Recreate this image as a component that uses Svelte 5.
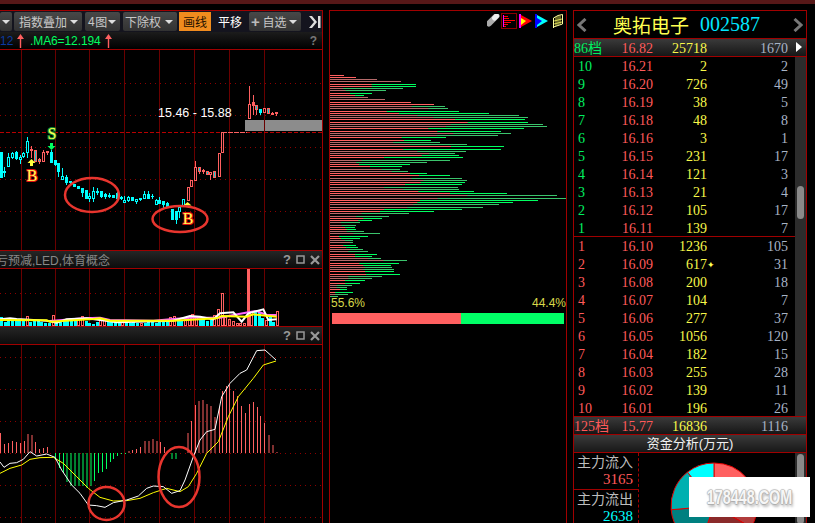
<script>
  const gridX = [21, 55, 89, 124, 159, 194, 229, 264];

  // x, body top, body bottom, wick top, wick bottom, kind (c solid cyan, h hollow cyan, r hollow red, s solid red, m red with cyan body)
  const candles = [
    [1, 152, 178, 152, 178, 'c'], [4, 171, 173, 167, 177, 'c'], [8, 157, 167, 153, 167, 'h'], [12, 153, 158, 152, 159, 'h'],
    [16, 152, 159, 151, 160, 'c'], [20, 157, 160, 155, 164, 'h'], [23, 153, 157, 152, 158, 'h'], [27, 141, 153, 137, 158, 'h'],
    [31, 149, 151, 146, 158, 's'], [35, 150, 162, 150, 162, 'm'], [39, 159, 162, 158, 164, 'm'], [43, 152, 162, 150, 162, 'r'],
    [47, 151, 153, 151, 155, 's'], [51, 152, 163, 150, 163, 'c'], [55, 160, 165, 160, 166, 'c'], [58, 163, 172, 163, 177, 'c'],
    [62, 176, 180, 168, 180, 'h'], [66, 177, 183, 175, 185, 'c'], [70, 181, 183, 181, 184, 'c'], [74, 184, 187, 184, 187, 'c'],
    [78, 186, 189, 186, 189, 'c'], [82, 188, 193, 188, 197, 'c'], [86, 190, 199, 190, 199, 'c'], [89, 196, 199, 193, 202, 'h'],
    [93, 191, 199, 187, 202, 'h'], [97, 191, 193, 188, 195, 'c'], [101, 191, 197, 191, 198, 'c'], [105, 194, 197, 193, 199, 'c'],
    [109, 195, 197, 193, 198, 'c'], [113, 195, 198, 195, 198, 'c'], [117, 193, 199, 192, 199, 'c'], [121, 197, 199, 196, 200, 'c'],
    [124, 200, 203, 196, 203, 'h'], [128, 197, 201, 196, 202, 'h'], [132, 197, 201, 197, 201, 'c'], [136, 199, 202, 199, 204, 'h'],
    [140, 198, 200, 198, 201, 'c'], [144, 194, 199, 191, 199, 'h'], [148, 194, 199, 191, 199, 'c'], [152, 196, 197, 194, 199, 'c'],
    [156, 200, 205, 199, 205, 'h'], [159, 200, 204, 197, 204, 'c'], [163, 201, 205, 201, 208, 'c'], [167, 203, 207, 202, 207, 'c'],
    [172, 209, 220, 209, 220, 'c'], [176, 211, 220, 211, 224, 'c'], [179, 207, 212, 207, 218, 'h'], [183, 199, 206, 199, 206, 'h'],
    [188, 187, 201, 187, 201, 'r'], [191, 180, 187, 180, 187, 'r'], [195, 167, 181, 161, 181, 'r'], [199, 167, 172, 167, 174, 'm'],
    [203, 170, 172, 169, 174, 's'], [207, 171, 175, 171, 175, 'm'], [210, 172, 175, 172, 180, 'r'], [214, 171, 178, 171, 178, 'm'],
    [219, 153, 177, 153, 177, 'r'], [222, 132, 153, 132, 153, 'r'], [249, 104, 119, 86, 119, 'r'], [253, 102, 106, 95, 115, 's'],
    [256, 105, 110, 105, 115, 'm'], [260, 109, 113, 109, 115, 'c'], [264, 108, 113, 108, 113, 'r'], [268, 108, 114, 108, 114, 'm'],
    [272, 113, 115, 112, 115, 's'], [276, 112, 114, 112, 116, 's']
  ];

  const volHeights = [9, 4, 6, 6, 5, 5, 6, 9, 4, 5, 5, 4, 3, 3, 10, 5, 6, 6, 5, 5, 5, 7, 9, 5, 3, 2, 4, 5, 5, 4, 5, 3, 5, 4, 5, 3, 4, 3, 2, 3, 4, 4, 3, 5, 4, 6, 8, 9, 5, 5, 6, 9, 11, 8, 6, 7, 5, 6, 10, 16, 32, 8, 6, 4, 2, 2, 2, 56, 13, 14, 14, 8, 5, 10, 4, 14];
  const volRed = new Set([7, 14, 21, 22, 27, 28, 33, 38, 46, 47, 50, 51, 52, 53, 58, 59, 60, 61, 62, 63, 64, 65, 66, 67, 68, 72, 75]);
  const volBars = volHeights.map((h, i) => ({ x: i * 3.68, h, red: volRed.has(i) }));

  // pairs read off the zoom: x, y in 3x pixels
  const toPts = (list, top) => list.map(([x, y]) => `${x / 3},${top + y / 3}`).join(' ');

  const volWhite = [[0, 208], [30, 205], [50, 207], [100, 210], [140, 212], [170, 218], [200, 208], [260, 205], [300, 210], [350, 217], [470, 214], [520, 212], [570, 198], [600, 200], [640, 208], [660, 190], [700, 187], [725, 215], [745, 190], [790, 178], [805, 210], [830, 208]];
  const volPink = [[150, 213], [250, 205], [300, 203], [330, 210], [460, 212], [520, 207], [570, 203], [660, 203], [700, 195], [745, 187], [770, 183], [800, 195], [830, 195]];
  const volYellow = [[0, 210], [140, 211], [150, 215], [280, 207], [300, 205], [330, 212], [520, 212], [600, 208], [650, 205], [665, 198], [740, 200], [760, 193], [830, 200]];

  const dif = [[0, 636], [12, 652], [30, 640], [50, 638], [70, 628], [90, 605], [110, 618], [140, 612], [165, 622], [185, 660], [215, 705], [240, 730], [265, 765], [290, 767], [315, 772], [340, 758], [380, 750], [415, 738], [440, 715], [460, 708], [490, 710], [515, 730], [540, 722], [555, 690], [580, 620], [600, 570], [620, 545], [645, 538], [665, 440], [690, 400], [720, 370], [740, 360], [770, 302], [795, 300], [828, 330]];
  const dea = [[0, 670], [30, 655], [65, 645], [90, 628], [120, 623], [160, 622], [190, 640], [230, 680], [265, 715], [300, 742], [340, 753], [380, 752], [420, 745], [460, 728], [500, 715], [540, 725], [565, 710], [590, 670], [620, 610], [655, 575], [685, 500], [715, 440], [760, 385], [790, 345], [828, 333]];

  // x, height: positive goes up in red, negative goes down in green
  const macd = [[0, 20], [4, 9], [8, 10], [12, 12], [16, 11], [20, 10], [24, 12], [27.5, 19], [31.5, 18], [35, 11], [39, 4], [43, 5], [47, 6], [55, -7], [59, -15], [63, -20], [66.5, -29], [70.5, -33], [74.5, -33], [78.5, -33], [82.5, -33], [86.5, -35], [90.5, -33], [94, -28], [98, -20], [102, -19], [106, -16], [110, -9], [113, -6], [117, -3], [121, -1], [125, -1], [128.5, 2], [132, 3], [136, 4], [140, 6], [144.5, 12], [148.5, 12], [152.5, 14], [156.5, 12], [160, 11], [164, 6], [171.5, -6], [175.5, -6], [187.5, 20], [191, 32], [195, 48], [198.5, 52], [202.5, 53], [206.5, 49], [210.5, 47], [214.5, 36], [219, 46], [222, 62], [226, 67], [229, 68], [233, 62], [237, 57], [241, 47], [245, 40], [249, 49], [253, 51], [257, 46], [260, 37], [264, 30], [268.5, 18], [272.5, 8], [276.5, 1]];

  // y in 3x pixels, end of red, end of green
  const profile = [[226, 42, 0], [232, 78, 0], [238, 141, 0], [244, 213, 0], [253, 125, 258], [259, 125, 258], [265, 40, 219], [271, 47, 168], [280, 60, 126], [286, 75, 102], [292, 114, 0], [298, 165, 0], [307, 243, 0], [313, 312, 0], [319, 245, 345], [325, 295, 354], [334, 170, 387], [340, 207, 477], [346, 262, 567], [352, 310, 594], [358, 375, 585], [367, 413, 594], [373, 362, 639], [379, 348, 651], [385, 295, 582], [394, 322, 513], [400, 370, 543], [406, 320, 504], [412, 215, 348], [421, 222, 303], [427, 190, 330], [433, 240, 411], [439, 363, 522], [448, 220, 513], [454, 262, 408], [460, 297, 375], [466, 275, 387], [472, 162, 399], [481, 95, 360], [487, 78, 291], [493, 87, 240], [499, 120, 216], [508, 155, 210], [514, 185, 234], [520, 240, 291], [526, 267, 360], [535, 245, 396], [541, 280, 411], [547, 272, 405], [553, 225, 396], [562, 162, 384], [568, 220, 387], [574, 265, 432], [580, 360, 531], [586, 412, 681], [595, 323, 720], [601, 270, 624], [607, 262, 549], [613, 250, 507], [622, 232, 459], [628, 162, 396], [634, 150, 312], [640, 95, 237], [649, 78, 177], [655, 100, 156], [661, 85, 126], [667, 33, 90], [676, 35, 78], [682, 45, 75], [688, 50, 78], [694, 50, 102], [700, 70, 150], [709, 27, 114], [715, 33, 90], [721, 45, 69], [727, 60, 69], [736, 40, 78], [742, 48, 84], [748, 60, 99], [754, 55, 114], [763, 75, 141], [769, 75, 126], [775, 115, 153], [781, 160, 231], [790, 88, 207], [796, 100, 183], [802, 105, 186], [808, 100, 192], [814, 105, 192], [823, 108, 210], [829, 55, 156], [835, 55, 126], [841, 45, 105], [850, 45, 90], [856, 20, 66], [862, 20, 51], [868, 30, 51], [877, 15, 69], [883, 15, 54], [889, 0, 24]];

  const sells = [
    ['10', '16.21', '2', '2'], ['9', '16.20', '726', '49'], ['8', '16.19', '38', '5'], ['7', '16.18', '48', '8'], ['6', '16.16', '3', '1'],
    ['5', '16.15', '231', '17'], ['4', '16.14', '121', '3'], ['3', '16.13', '21', '4'], ['2', '16.12', '105', '17'], ['1', '16.11', '139', '7']
  ];
  const buys = [
    ['1', '16.10', '1236', '105'], ['2', '16.09', '617', '31'], ['3', '16.08', '200', '18'], ['4', '16.07', '104', '7'], ['5', '16.06', '277', '37'],
    ['6', '16.05', '1056', '120'], ['7', '16.04', '182', '15'], ['8', '16.03', '255', '28'], ['9', '16.02', '139', '11'], ['10', '16.01', '196', '26']
  ];

  function wedge(cx, cy, r, a0, a1) {
    const p = (a) => `${cx + r * Math.sin(a * Math.PI / 180)} ${cy - r * Math.cos(a * Math.PI / 180)}`;
    return `M${cx} ${cy}L${p(a0)}A${r} ${r} 0 ${a1 - a0 > 180 ? 1 : 0} 1 ${p(a1)}Z`;
  }
</script>

<div class="app">
  <div class="topbar"></div>
  <div class="main">
    <section class="left">
      <div class="toolbar">
        <div class="btn cut"><i class="caret"></i></div>
        <div class="btn w68">指数叠加<i class="caret"></i></div>
        <div class="btn w35"><span class="arial">4</span>图<i class="caret"></i></div>
        <div class="btn w54">下除权<i class="caret"></i></div>
        <div class="btn orange">画线</div>
        <div class="plain">平移</div>
        <div class="btn w52"><b class="plus">+</b>自选<i class="caret"></i></div>
        <svg class="endicon" width="13" height="14" viewBox="0 0 13 14">
          <path d="M1 1h3l5 6-5 6H1l5-6z" fill="#ddd" />
          <rect x="10" y="1" width="2.5" height="12" fill="#ddd" />
        </svg>
      </div>
      <div class="ma-row">
        <span class="ma-blue">12</span>
        <svg class="up" width="7" height="14" viewBox="0 0 7 14"><path d="M3.5 0L7 5H4.2V14H2.8V5H0z" fill="#ff6060" /></svg>
        <span class="ma-green">.MA6=12.194</span>
        <svg class="up" width="7" height="14" viewBox="0 0 7 14"><path d="M3.5 0L7 5H4.2V14H2.8V5H0z" fill="#ff6060" /></svg>
        <span class="help">?</span>
      </div>

      <svg class="chart" width="322" height="200" viewBox="0 50 322 200">
        {#each [83, 115, 147, 179, 211] as y}
          <line x1="0" x2="322" y1={y + 0.5} y2={y + 0.5} class="dots" />
        {/each}
        {#each gridX as x}
          <line x1={x + 0.5} x2={x + 0.5} y1="50" y2="250" class="grid" />
        {/each}
        <rect x="245" y="120" width="77" height="11" fill="#8c8c8c" />
        <line x1={264.5} x2={264.5} y1="120" y2="131" class="grid" />
        <line x1="0" x2="322" y1="132.5" y2="132.5" class="dash" />
        <line x1="222" x2="247" y1="132.5" y2="132.5" stroke="#ff6060" stroke-dasharray="5 1" />
        {#each candles as [x, top, bottom, wickTop, wickBottom, kind]}
          <line x1={x + 0.5} x2={x + 0.5} y1={wickTop} y2={wickBottom} stroke={'rsm'.includes(kind) ? '#ff6060' : '#00ffff'} />
          {#if kind === 'c'}
            <rect x={x - 1} y={top} width="3" height={bottom - top} fill="#00ffff" />
          {:else if kind === 'h'}
            <rect x={x - 0.5} y={top + 0.5} width="2" height={bottom - top - 1} fill="#000" stroke="#00ffff" />
          {:else if kind === 's'}
            <rect x={x - 1} y={top} width="3" height={bottom - top} fill="#ff6060" />
          {:else if kind === 'm'}
            <rect x={x - 0.5} y={top + 0.5} width="2" height={bottom - top - 1} fill="#00cccc" stroke="#ff6060" />
          {:else}
            <rect x={x - 0.5} y={top + 0.5} width="2" height={bottom - top - 1} fill="#000" stroke="#ff6060" />
          {/if}
        {/each}
        <path d="M31.5 159l4 4h-2.5v3h-3v-3h-2.5z" fill="#ffff40" />
        <path d="M51.5 150l-4-4h2.500v-3h3v3h2.500z" fill="#00ff60" />
        <path d="M187.500 202l4 3.500h-8z" fill="#ffff40" />
        <text x="32" y="181" class="mark b">B</text>
        <text x="52" y="139" class="mark s">S</text>
        <text x="188" y="223.500" class="mark b">B</text>
        <text x="158" y="117" class="range">15.46 - 15.88</text>
        <ellipse cx="92" cy="195" rx="27" ry="17" class="ring" />
        <ellipse cx="180" cy="219" rx="27.500" ry="13" class="ring" />
      </svg>

      <div class="subtitle">
        <span class="subtext">亏预减,LED,体育概念</span>
        <span class="subicons">
          <span>?</span>
          <svg width="9" height="9" viewBox="0 0 9 9"><rect x="1" y="1" width="7" height="7" fill="none" stroke="#999" stroke-width="1.500" /></svg>
          <svg width="10" height="10" viewBox="0 0 10 10"><path d="M1 1l8 8M9 1L1 9" stroke="#999" stroke-width="2.200" /></svg>
        </span>
      </div>

      <svg class="chart" width="322" height="57" viewBox="0 269 322 57">
        <line x1="0" x2="322" y1="293.500" y2="293.500" class="dots" />
        {#each gridX as x}
          <line x1={x + 0.5} x2={x + 0.5} y1="269" y2="326" class="grid" />
        {/each}
        {#each volBars as bar}
          {#if bar.red}
            <rect x={Math.round(bar.x) + 0.5} y={325.5 - bar.h} width="2" height={bar.h} fill={bar.h > 40 ? '#ff6060' : 'none'} stroke="#ff6060" />
          {:else}
            <rect x={Math.round(bar.x)} y={326 - bar.h} width="3" height={bar.h} fill="#00ffff" />
          {/if}
        {/each}
        <polyline points={toPts(volPink, 250)} class="vline" stroke="#ff66ff" stroke-width="2" />
        <polyline points={toPts(volWhite, 250)} class="vline" stroke="#fff" stroke-width="2" />
        <polyline points={toPts(volYellow, 250)} class="vline" stroke="#ffff00" stroke-width="2" />
      </svg>

      <div class="subtitle">
        <span></span>
        <span class="subicons">
          <span>?</span>
          <svg width="9" height="9" viewBox="0 0 9 9"><rect x="1" y="1" width="7" height="7" fill="none" stroke="#999" stroke-width="1.500" /></svg>
          <svg width="10" height="10" viewBox="0 0 10 10"><path d="M1 1l8 8M9 1L1 9" stroke="#999" stroke-width="2.200" /></svg>
        </span>
      </div>

      <svg class="chart last" width="322" height="178" viewBox="0 345 322 178">
        {#each [357, 389, 421, 453, 485, 517] as y}
          <line x1="0" x2="322" y1={y + 0.5} y2={y + 0.5} class="dots" />
        {/each}
        {#each gridX as x}
          <line x1={x + 0.5} x2={x + 0.5} y1="345" y2="523" class="grid" />
        {/each}
        {#each macd as [x, h]}
          <line x1={x + 0.5} x2={x + 0.5} y1={453} y2={453 - h} stroke={h > 0 ? '#ff6060' : '#00ff60'} />
        {/each}
        <polyline points={toPts(dea, 250)} class="mline" stroke="#ffff00" />
        <polyline points={toPts(dif, 250)} class="mline" stroke="#fff" />
        <ellipse cx="106.500" cy="503.500" rx="18" ry="16.500" class="ring" />
        <ellipse cx="179" cy="477" rx="20.500" ry="30" class="ring" />
      </svg>
    </section>

    <section class="middle">
      <div class="tools">
        <svg width="13" height="14" viewBox="0 0 13 14">
          <path d="M2 9.500L9.500 2" stroke="#aaa" stroke-width="6" stroke-linecap="round" />
          <path d="M7.500 4L9.500 2" stroke="#eee" stroke-width="5" stroke-linecap="round" />
        </svg>
        <svg class="tool-box" width="16" height="16" viewBox="0 0 16 16">
          <rect x="0.500" y="0.500" width="15" height="15" fill="#000" stroke="#8b0000" />
          <rect x="2" y="2" width="1" height="12" fill="#ff00ff" />
          <path d="M3 3h4v1H3zM3 5h5v1H3zM3 7h11v1H3zM3 9h7v1H3zM3 11h4v1H3zM3 13h2v1H3z" fill="#ff0000" />
        </svg>
        <svg class="tool-flag" width="13" height="14" viewBox="0 0 13 14">
          <path d="M0 0h2v14H0z" fill="#ff00ff" />
          <path d="M2 1l11 6-11 6z" fill="#ff0000" />
          <path d="M2 4l5 3-5 4z" fill="#ffff00" />
        </svg>
        <svg class="tool-flag2" width="13" height="14" viewBox="0 0 13 14">
          <path d="M0 0h2v14H0z" fill="#0000ff" />
          <path d="M2 1l11 6-11 6z" fill="#00ffff" />
          <path d="M2 4l5 3-5 4z" fill="#0000ff" />
        </svg>
        <svg class="tool-book" width="10" height="14" viewBox="0 0 10 14">
          <path d="M0.500 14V4L5 1.500 9.500 0.500V10L0.500 13" fill="#000" stroke="#ffffa0" />
          <path d="M3 3v9M5 2v9M7 1.500v9M1 7l8-2M1 10l8-2" stroke="#ffff60" stroke-width="0.800" />
        </svg>
      </div>
      <svg class="profile" width="236" height="223" viewBox="0 74 236 223">
        {#each profile as [y, red, green], i}
          {#if green}
            <rect x="0" y={Math.round(y / 3)} width={green / 3} height="1" fill={i % 4 < 2 ? '#00ff60' : '#3bc46c'} />
          {/if}
          <rect x="0" y={Math.round(y / 3)} width={red / 3} height="1" fill={i % 4 < 2 ? '#ff6060' : '#b56a6a'} />
        {/each}
      </svg>
      <div class="pct">
        <span>55.6%</span>
        <span>44.4%</span>
      </div>
      <div class="ratio">
        <div class="ratio-red"></div>
        <div class="ratio-green"></div>
      </div>
    </section>

    <section class="right">
      <div class="head">
        <svg width="10" height="14" viewBox="0 0 10 14"><path d="M8.500 1L2 7l6.500 6" fill="none" stroke="#777" stroke-width="3" /></svg>
        <span class="name">奥拓电子</span>
        <span class="code">002587</span>
        <svg class="next" width="10" height="14" viewBox="0 0 10 14"><path d="M1.500 1L8 7l-6.500 6" fill="none" stroke="#777" stroke-width="3" /></svg>
      </div>

      <div class="row sum">
        <span class="green">86档</span><span class="red">16.82</span><span class="yellow">25718</span><span class="blue">1670</span>
        <i class="play"></i>
      </div>

      <div class="book">
        <div class="levels">
          <div class="block">
            {#each sells as [n, price, vol, count]}
              <div class="row">
                <span class="green idx">{n}</span><span class="red">{price}</span><span class="yellow">{vol}</span><span class="blue">{count}</span>
              </div>
            {/each}
          </div>
          <div class="block nb">
            {#each buys as [n, price, vol, count]}
              <div class="row">
                <span class="red idx">{n}</span><span class="red">{price}</span>
                <span class="yellow">{vol}{#if price === '16.09'}<i class="star">✦</i>{/if}</span>
                <span class="blue">{count}</span>
              </div>
            {/each}
          </div>
        </div>
        <div class="scroll"><div class="thumb"></div></div>
      </div>

      <div class="row sum two">
        <span class="red">125档</span><span class="red">15.77</span><span class="yellow">16836</span><span class="blue">1116</span>
      </div>

      <div class="fund-title">资金分析(万元)</div>

      <div class="fund">
        <div class="flows">
          <div class="flow">
            <div>主力流入</div>
            <div class="num red">3165</div>
          </div>
          <div class="flow">
            <div>主力流出</div>
            <div class="num cyan">2638</div>
          </div>
        </div>
        <svg class="pie" width="156" height="70" viewBox="639 453 156 70">
          <path d={wedge(714, 506, 43, 0, 50)} fill="#ff6060" stroke="#e00000" />
          <path d={wedge(714, 506, 43, 50, 120)} fill="#b03c3c" stroke="#e00000" />
          <path d={wedge(714, 506, 43, 120, 200)} fill="#8a2a2a" stroke="#e00000" />
          <path d={wedge(714, 506, 43, 200, 265)} fill="#008080" stroke="#e00000" />
          <path d={wedge(714, 506, 43, 265, 322)} fill="#00b0b0" stroke="#e00000" />
          <path d={wedge(714, 506, 43, 322, 360)} fill="#00ffff" stroke="#e00000" />
        </svg>
        <div class="scroll short"><div class="thumb long"></div></div>
      </div>
    </section>
  </div>

  <div class="watermark"><span>178448.COM</span></div>
</div>

<style>
  :global(body) {
    margin: 0;
    background: #000;
  }
  .app {
    position: relative;
    width: 815px;
    height: 523px;
    overflow: hidden;
    background: #000;
    font-family: "Liberation Sans", "Noto Sans CJK SC", sans-serif;
  }
  .topbar {
    height: 4px;
    background: #561818;
  }
  .main {
    display: flex;
    margin-top: 6px;
    height: 513px;
  }

  .left {
    width: 322px;
    flex: none;
    border-top: 1px solid #a00000;
    border-right: 1px solid #a00000;
    display: flex;
    flex-direction: column;
  }
  .toolbar {
    height: 21px;
    display: flex;
    align-items: center;
    background: #14141e;
    color: #c8c8c8;
    font-size: 12px;
    flex: none;
  }
  .btn {
    height: 19px;
    display: flex;
    align-items: center;
    justify-content: space-between;
    box-sizing: border-box;
    padding: 0 4px 0 5px;
    margin-right: 3px;
    background: linear-gradient(#484848, #323232);
    border-radius: 2px;
  }
  .cut {
    width: 12px;
    margin-right: 2px;
    padding: 0 2px 0 0;
    justify-content: flex-end;
  }
  .w68 { width: 68px; }
  .w35 { width: 35px; padding-left: 3px; }
  .w54 { width: 54px; padding-left: 2px; }
  .w52 { width: 52px; padding-left: 2px; }
  .arial { font-size: 12px; }
  .plus { font-size: 15px; color: #bbb; line-height: 1; }
  .orange {
    width: 32px;
    background: #f08c1e;
    color: #1c1000;
    margin-left: -1px;
    margin-right: 7px;
    padding: 0 4px;
    justify-content: center;
    border-radius: 0;
  }
  .plain {
    width: 31px;
    color: #fff;
  }
  .caret {
    display: block;
    width: 0;
    height: 0;
    border-left: 4px solid transparent;
    border-right: 4px solid transparent;
    border-top: 4px solid #ddd;
  }
  .endicon {
    margin-left: 4px;
  }
  .ma-row {
    height: 17px;
    display: flex;
    align-items: center;
    flex: none;
    font-size: 12px;
    background: linear-gradient(#1c1c1c, #000);
    border-bottom: 1px solid #a00000;
  }
  .ma-blue {
    color: #0b3aa0;
    width: 17px;
  }
  .ma-green {
    color: #00ff60;
    margin: 0 4px 0 6px;
    letter-spacing: -0.1px;
  }
  .up {
    flex: none;
  }
  .help {
    margin-left: auto;
    margin-right: 5px;
    color: #777;
    font-weight: bold;
  }
  .chart {
    display: block;
    flex: none;
  }
  .chart.last {
    flex: 1;
  }
  .grid {
    stroke: #6a0000;
  }
  .dots {
    stroke: #8b0000;
    stroke-dasharray: 1 4;
  }
  .dash {
    stroke: #b80000;
    stroke-dasharray: 4 2;
  }
  .mark {
    font-family: "Liberation Serif", serif;
    font-size: 16px;
    text-anchor: middle;
    paint-order: stroke;
    stroke-width: 2px;
    fill: #ffff50;
  }
  .mark.b { stroke: #e01010; }
  .mark.s { stroke: #108a30; }
  .range {
    font-size: 12.500px;
    fill: #fff;
  }
  .ring {
    fill: none;
    stroke: #e8352e;
    stroke-width: 2.500;
  }
  .subtitle {
    height: 17px;
    flex: none;
    display: flex;
    align-items: center;
    justify-content: space-between;
    background: linear-gradient(#262626, #0c0c0c);
    border-top: 1px solid #a00000;
    border-bottom: 1px solid #a00000;
    font-size: 12px;
    color: #888;
    overflow: hidden;
  }
  .subtext {
    margin-left: -4px;
    white-space: nowrap;
  }
  .subicons {
    display: flex;
    align-items: center;
    gap: 5px;
    margin-right: 2px;
    color: #999;
    font-weight: bold;
    font-size: 13px;
  }
  .vline, .mline {
    fill: none;
  }

  .middle {
    width: 236px;
    margin-left: 6px;
    flex: none;
    border: 1px solid #a00000;
    border-bottom: none;
    position: relative;
    display: flex;
    flex-direction: column;
  }
  .tools {
    height: 17px;
    padding-top: 1px;
    margin-bottom: 46px;
    display: flex;
    align-items: center;
    justify-content: flex-end;
    padding-right: 3px;
    flex: none;
  }
  .tool-box { margin-left: 1px; }
  .tool-flag { margin-left: 2px; }
  .tool-flag2 { margin-left: 3px; }
  .tool-book { margin-left: 5px; }
  .profile {
    display: block;
    flex: none;
    margin-top: -1px;
  }
  .pct {
    display: flex;
    justify-content: space-between;
    margin-top: -1px;
    color: #d8d84a;
    font-size: 12px;
    line-height: 14px;
    padding: 0 0 0 1px;
  }
  .ratio {
    display: flex;
    height: 11px;
    margin: 3px 2px 0 2px;
  }
  .ratio-red {
    width: 129px;
    background: #ff6060;
  }
  .ratio-green {
    flex: 1;
    background: #00ff66;
  }

  .right {
    width: 232px;
    margin-left: 6px;
    flex: none;
    border: 1px solid #a00000;
    border-bottom: none;
    display: flex;
    flex-direction: column;
    font-family: "Liberation Serif", "Noto Sans CJK SC", serif;
    font-size: 14px;
  }
  .head {
    height: 27px;
    flex: none;
    display: flex;
    align-items: center;
    padding-left: 3px;
    border-bottom: 1px solid #a00000;
  }
  .name {
    margin-left: 26px;
    font-size: 19px;
    color: #ffff50;
  }
  .code {
    margin-left: 11px;
    font-size: 20px;
    color: #00e6ff;
  }
  .next {
    margin-left: auto;
    margin-right: 3px;
  }
  .row {
    position: relative;
    height: 18px;
    line-height: 20px;
    display: grid;
    grid-template-columns: 41px 38px 54px 81px;
    text-align: right;
    white-space: nowrap;
  }
  .idx {
    text-align: left;
    padding-left: 4px;
  }
  .sum {
    height: 17px;
    flex: none;
    line-height: 19px;
    background: linear-gradient(#3a3a3a, #161616);
    border-bottom: 1px solid #a00000;
  }
  .sum span:first-child {
    text-align: left;
  }
  .play {
    position: absolute;
    left: 222px;
    top: 3px;
    width: 0;
    height: 0;
    border-top: 5px solid transparent;
    border-bottom: 5px solid transparent;
    border-left: 6px solid #fff;
  }
  .green { color: #00f060; }
  .red { color: #ff5a5a; }
  .yellow { color: #f8f84a; position: relative; }
  .blue { color: #a8b4c6; }
  .cyan { color: #00ffff; }
  .star {
    position: absolute;
    left: 54px;
    top: 0;
    font-style: normal;
    font-size: 9px;
    color: #ffff50;
  }
  .book {
    display: flex;
    height: 360px;
    flex: none;
    border-bottom: 1px solid #a00000;
    box-sizing: border-box;
  }
  .levels {
    flex: 1;
  }
  .block {
    height: 179px;
    border-bottom: 1px solid #a00000;
  }
  .block.nb {
    border-bottom: none;
  }
  .scroll {
    width: 11px;
    flex: none;
    background: #2c2c2c;
  }
  .thumb {
    width: 7px;
    height: 33px;
    margin: 129px 0 0 2px;
    background: #8a8a8a;
    border-radius: 4px;
  }
  .fund-title {
    height: 17px;
    line-height: 17px;
    flex: none;
    text-align: center;
    color: #f0f0f0;
    background: linear-gradient(#3a3a3a, #181818);
    border-bottom: 1px solid #a00000;
    font-family: "Liberation Sans", "Noto Sans CJK SC", sans-serif;
    font-size: 13px;
  }
  .fund {
    display: flex;
    flex: 1;
    min-height: 0;
  }
  .flows {
    width: 64px;
    flex: none;
    border-right: 1px dashed #a00000;
    color: #bdbdbd;
    text-align: right;
    font-family: "Liberation Sans", "Noto Sans CJK SC", sans-serif;
    line-height: 18px;
  }
  .flow {
    padding-right: 5px;
    height: 36px;
    border-bottom: 1px solid #a00000;
  }
  .flow:last-child {
    height: 33px;
    border-bottom: none;
  }
  .num {
    font-family: "Liberation Serif", serif;
    font-size: 15px;
    line-height: 15px;
    margin-top: 1px;
  }
  .pie {
    flex: 1;
    display: block;
  }
  .scroll.short {
    height: 70px;
  }
  .thumb.long {
    height: 70px;
    margin-top: 1px;
  }
  .watermark {
    position: absolute;
    left: 689px;
    top: 477px;
    width: 121px;
    height: 40px;
    display: flex;
    align-items: center;
    justify-content: center;
    background: #fff;
    color: #f6f6f6;
    font-weight: bold;
    font-size: 20px;
    white-space: nowrap;
    text-shadow: 1px 0 1px #aaa, -1px 0 1px #bbb, 0 1px 1px #aaa, 0 -1px 1px #ccc, 2px 3px 3px #bbb;
  }
  .watermark span {
    display: block;
    transform: scaleX(0.72);
  }
</style>
